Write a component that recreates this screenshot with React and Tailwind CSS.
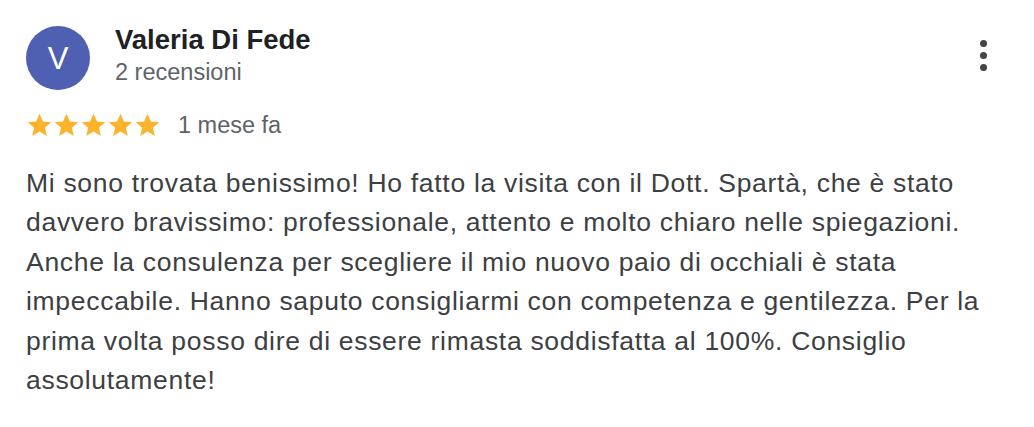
export default function App() {
  return (
    <div className="w-[1034px] h-[427px] bg-white px-[26px] pt-[26px] font-['Liberation_Sans',Arial,sans-serif]">
      <div className="flex items-start">
        <div className="w-16 h-16 rounded-full bg-[#4f5fb1] flex items-center justify-center text-white text-[31px] leading-none shrink-0">
          V
        </div>
        <div className="ml-[25px] -mt-[2px] flex-1">
          <div className="text-[27.5px] font-bold text-[#202124] leading-[32px]">Valeria Di Fede</div>
          <div className="text-[23.5px] text-[#5f6368] leading-[30px] mt-[1px]">2 recensioni</div>
        </div>
        <button className="mt-[13px] mr-[13px] w-6 h-8 flex flex-col items-center justify-center gap-[5px]">
          <span className="w-[7px] h-[7px] rounded-full bg-[#444]" />
          <span className="w-[7px] h-[7px] rounded-full bg-[#444]" />
          <span className="w-[7px] h-[7px] rounded-full bg-[#444]" />
        </button>
      </div>

      <div className="flex items-center mt-[22px] h-[26px]">
        <div className="flex">
          {[0, 1, 2, 3, 4].map((i) => (
            <svg key={i} width="27" height="27" viewBox="0 0 24 24">
              <path
                fill="#fbb42c"
                d="M12 1.6l3 6.9 7.4.6-5.6 4.9 1.7 7.3L12 17.4l-6.5 3.9 1.7-7.3-5.6-4.9 7.4-.6z"
              />
            </svg>
          ))}
        </div>
        <span className="ml-[17px] text-[23.5px] text-[#5f6368] leading-[26px]">1 mese fa</span>
      </div>

      <p className="mt-[26px] w-[975px] text-[26.5px] tracking-[0.7px] leading-[39.4px] text-[#3c4043]">
        Mi sono trovata benissimo! Ho fatto la visita con il Dott. Spartà, che è stato davvero bravissimo: professionale, attento e molto chiaro nelle spiegazioni. Anche la consulenza per scegliere il mio nuovo paio di occhiali è stata impeccabile. Hanno saputo consigliarmi con competenza e gentilezza. Per la prima volta posso dire di essere rimasta soddisfatta al 100%. Consiglio assolutamente!
      </p>
    </div>
  );
}
